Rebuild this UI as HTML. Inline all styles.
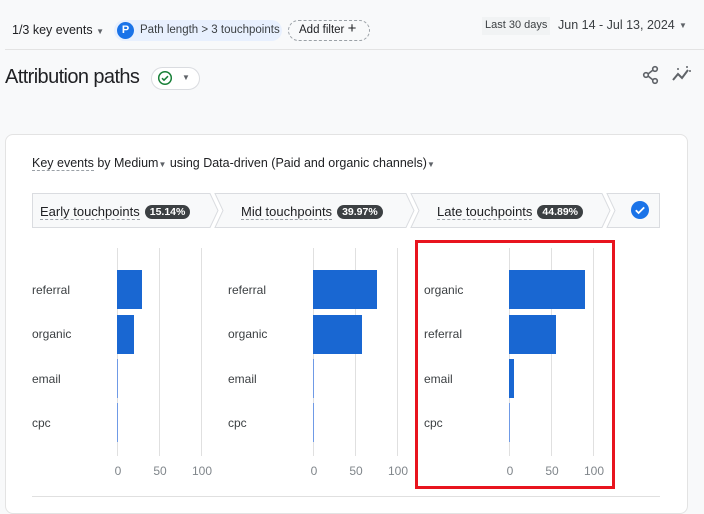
<!DOCTYPE html>
<html><head><meta charset="utf-8"><style>
*{margin:0;padding:0;box-sizing:border-box}
body{width:704px;height:500px;background:#f8f9fa;font-family:"Liberation Sans",Arial,sans-serif;color:#3c4043;position:relative;overflow:hidden}
.a{position:absolute;white-space:nowrap}
.card{position:absolute;left:5px;top:134px;width:683px;height:380px;background:#fff;border:1px solid #e3e3e3;border-radius:8px}
.lbl{position:absolute;font-size:12px;color:#3c4043}
.tick{position:absolute;font-size:12px;color:#80868b;transform:translateX(-50%)}
.grid{position:absolute;width:1px;background:#e0e0e0;top:248px;height:208px}
.bar{position:absolute;background:#1967d2;height:39px}
.pill{display:inline-block;background:#3c4043;color:#fff;border-radius:9px;font-size:10.5px;font-weight:bold;padding:1px 5px;margin-left:5px;vertical-align:1px}
.tt{font-size:13px;color:#202124;border-bottom:1px dashed #9aa0a6}
</style></head><body>
<div class="a" style="left:12px;top:23px;font-size:12.5px;color:#202124">1/3 key events <span style="font-size:8px;color:#5f6368">▼</span></div>
<div class="a" style="left:114px;top:20px;height:21px;width:168px;background:#e8f0fe;border-radius:11px"></div>
<div class="a" style="left:117px;top:22px;width:17px;height:17px;border-radius:50%;background:#1a73e8;color:#fff;font-size:11px;font-weight:bold;text-align:center;line-height:17px">P</div>
<div class="a" style="left:140px;top:24px;font-size:11.5px;color:#3c4043">Path length &gt; 3 touchpoints</div>
<div class="a" style="left:288px;top:20px;width:82px;height:21px;border:1px dashed #9aa0a6;border-radius:11px;font-size:11.5px;color:#202124;padding:3px 0 0 10px">Add filter <span style="font-size:15px;line-height:10px">+</span></div>
<div class="a" style="left:482px;top:17px;height:18px;background:#f1f3f4;font-size:11px;padding:2px 3px;color:#3c4043">Last 30 days</div>
<div class="a" style="left:558px;top:18px;font-size:12.5px;color:#3c4043">Jun 14 - Jul 13, 2024</div>
<div class="a" style="left:679px;top:21px;font-size:8px;color:#5f6368">▼</div>
<div class="a" style="left:5px;top:49px;width:699px;height:1px;background:#e3e3e3"></div>
<div class="a" style="left:5px;top:66px;font-size:20px;letter-spacing:-0.6px;color:#202124">Attribution paths</div>
<div class="a" style="left:151px;top:67px;width:49px;height:23px;border:1px solid #dadce0;border-radius:12px;background:#fff"></div>
<svg class="a" style="left:157px;top:70px" width="16" height="16" viewBox="0 0 16 16"><circle cx="8" cy="8" r="6.3" fill="none" stroke="#188038" stroke-width="1.5"/><path d="M5 8.2l2 2 4-4" fill="none" stroke="#188038" stroke-width="1.5"/></svg>
<div class="a" style="left:182px;top:73px;font-size:8px;color:#5f6368">▼</div>
<svg class="a" style="left:642px;top:65px" width="18" height="20" viewBox="0 0 18 20"><circle cx="13" cy="4" r="2.3" fill="none" stroke="#5f6368" stroke-width="1.6"/><circle cx="4" cy="10" r="2.3" fill="none" stroke="#5f6368" stroke-width="1.6"/><circle cx="13" cy="16" r="2.3" fill="none" stroke="#5f6368" stroke-width="1.6"/><path d="M6 9l5-4M6 11l5 4" stroke="#5f6368" stroke-width="1.6"/></svg>
<svg class="a" style="left:672px;top:66px" width="20" height="16" viewBox="0 0 20 16"><path d="M1 14l5-6 4 4 6-8" fill="none" stroke="#5f6368" stroke-width="2"/><path d="M14 1h2M17 5h2M5 3h2" stroke="#5f6368" stroke-width="1.5"/></svg>
<div class="card"></div>
<div class="a" style="left:32px;top:156px;font-size:12.5px;color:#202124"><span style="border-bottom:1px dashed #9aa0a6">Key events</span> by Medium<span style="font-size:8px;color:#5f6368">▼</span> using Data-driven (Paid and organic channels)<span style="font-size:8px;color:#5f6368">▼</span></div>
<svg class="a" style="left:32px;top:193px" width="630" height="35" viewBox="0 0 630 35">
<g fill="#f8f9fa" stroke="#dadce0" stroke-width="1">
<path d="M0.5 0.5H178l8 17-8 17H0.5z"/>
<path d="M183 0.5H374l8 17-8 17H183l8-17z"/>
<path d="M379 0.5H570l8 17-8 17H379l8-17z"/>
<path d="M575 0.5H627.5v34H575l8-17z"/>
</g></svg>
<div class="a" style="left:40px;top:203px"><span class="tt">Early touchpoints</span><span class="pill">15.14%</span></div>
<div class="a" style="left:241px;top:203px"><span class="tt">Mid touchpoints</span><span class="pill">39.97%</span></div>
<div class="a" style="left:437px;top:203px"><span class="tt">Late touchpoints</span><span class="pill">44.89%</span></div>
<svg class="a" style="left:630px;top:200px" width="20" height="20" viewBox="0 0 20 20"><circle cx="10" cy="10" r="9" fill="#1a73e8"/><path d="M5.8 10.2l2.8 2.8 5.6-5.6" fill="none" stroke="#fff" stroke-width="1.8"/></svg>

<div class="grid" style="left:117px"></div><div class="grid" style="left:159px"></div><div class="grid" style="left:201px"></div>
<div class="lbl" style="left:32px;top:283px">referral</div><div class="lbl" style="left:32px;top:327px">organic</div><div class="lbl" style="left:32px;top:372px">email</div><div class="lbl" style="left:32px;top:416px">cpc</div>
<div class="bar" style="left:117px;top:270px;width:25px"></div><div class="bar" style="left:117px;top:315px;width:17px"></div>
<div class="bar" style="left:117px;top:359px;width:1px;background:#6f9ae6"></div><div class="bar" style="left:117px;top:403px;width:1px;background:#6f9ae6"></div>
<div class="tick" style="left:118px;top:464px">0</div><div class="tick" style="left:160px;top:464px">50</div><div class="tick" style="left:202px;top:464px">100</div>

<div class="grid" style="left:313px"></div><div class="grid" style="left:355px"></div><div class="grid" style="left:397px"></div>
<div class="lbl" style="left:228px;top:283px">referral</div><div class="lbl" style="left:228px;top:327px">organic</div><div class="lbl" style="left:228px;top:372px">email</div><div class="lbl" style="left:228px;top:416px">cpc</div>
<div class="bar" style="left:313px;top:270px;width:64px"></div><div class="bar" style="left:313px;top:315px;width:49px"></div>
<div class="bar" style="left:313px;top:359px;width:1px;background:#6f9ae6"></div><div class="bar" style="left:313px;top:403px;width:1px;background:#6f9ae6"></div>
<div class="tick" style="left:314px;top:464px">0</div><div class="tick" style="left:356px;top:464px">50</div><div class="tick" style="left:398px;top:464px">100</div>

<div class="grid" style="left:509px"></div><div class="grid" style="left:551px"></div><div class="grid" style="left:593px"></div>
<div class="lbl" style="left:424px;top:283px">organic</div><div class="lbl" style="left:424px;top:327px">referral</div><div class="lbl" style="left:424px;top:372px">email</div><div class="lbl" style="left:424px;top:416px">cpc</div>
<div class="bar" style="left:509px;top:270px;width:76px"></div><div class="bar" style="left:509px;top:315px;width:47px"></div>
<div class="bar" style="left:509px;top:359px;width:5px"></div><div class="bar" style="left:509px;top:403px;width:1px;background:#6f9ae6"></div>
<div class="tick" style="left:510px;top:464px">0</div><div class="tick" style="left:552px;top:464px">50</div><div class="tick" style="left:594px;top:464px">100</div>
<div class="a" style="left:415px;top:240px;width:200px;height:249px;border:3px solid #e8141e"></div>
<div class="a" style="left:32px;top:496px;width:628px;height:1px;background:#e0e0e0"></div>
</body></html>
